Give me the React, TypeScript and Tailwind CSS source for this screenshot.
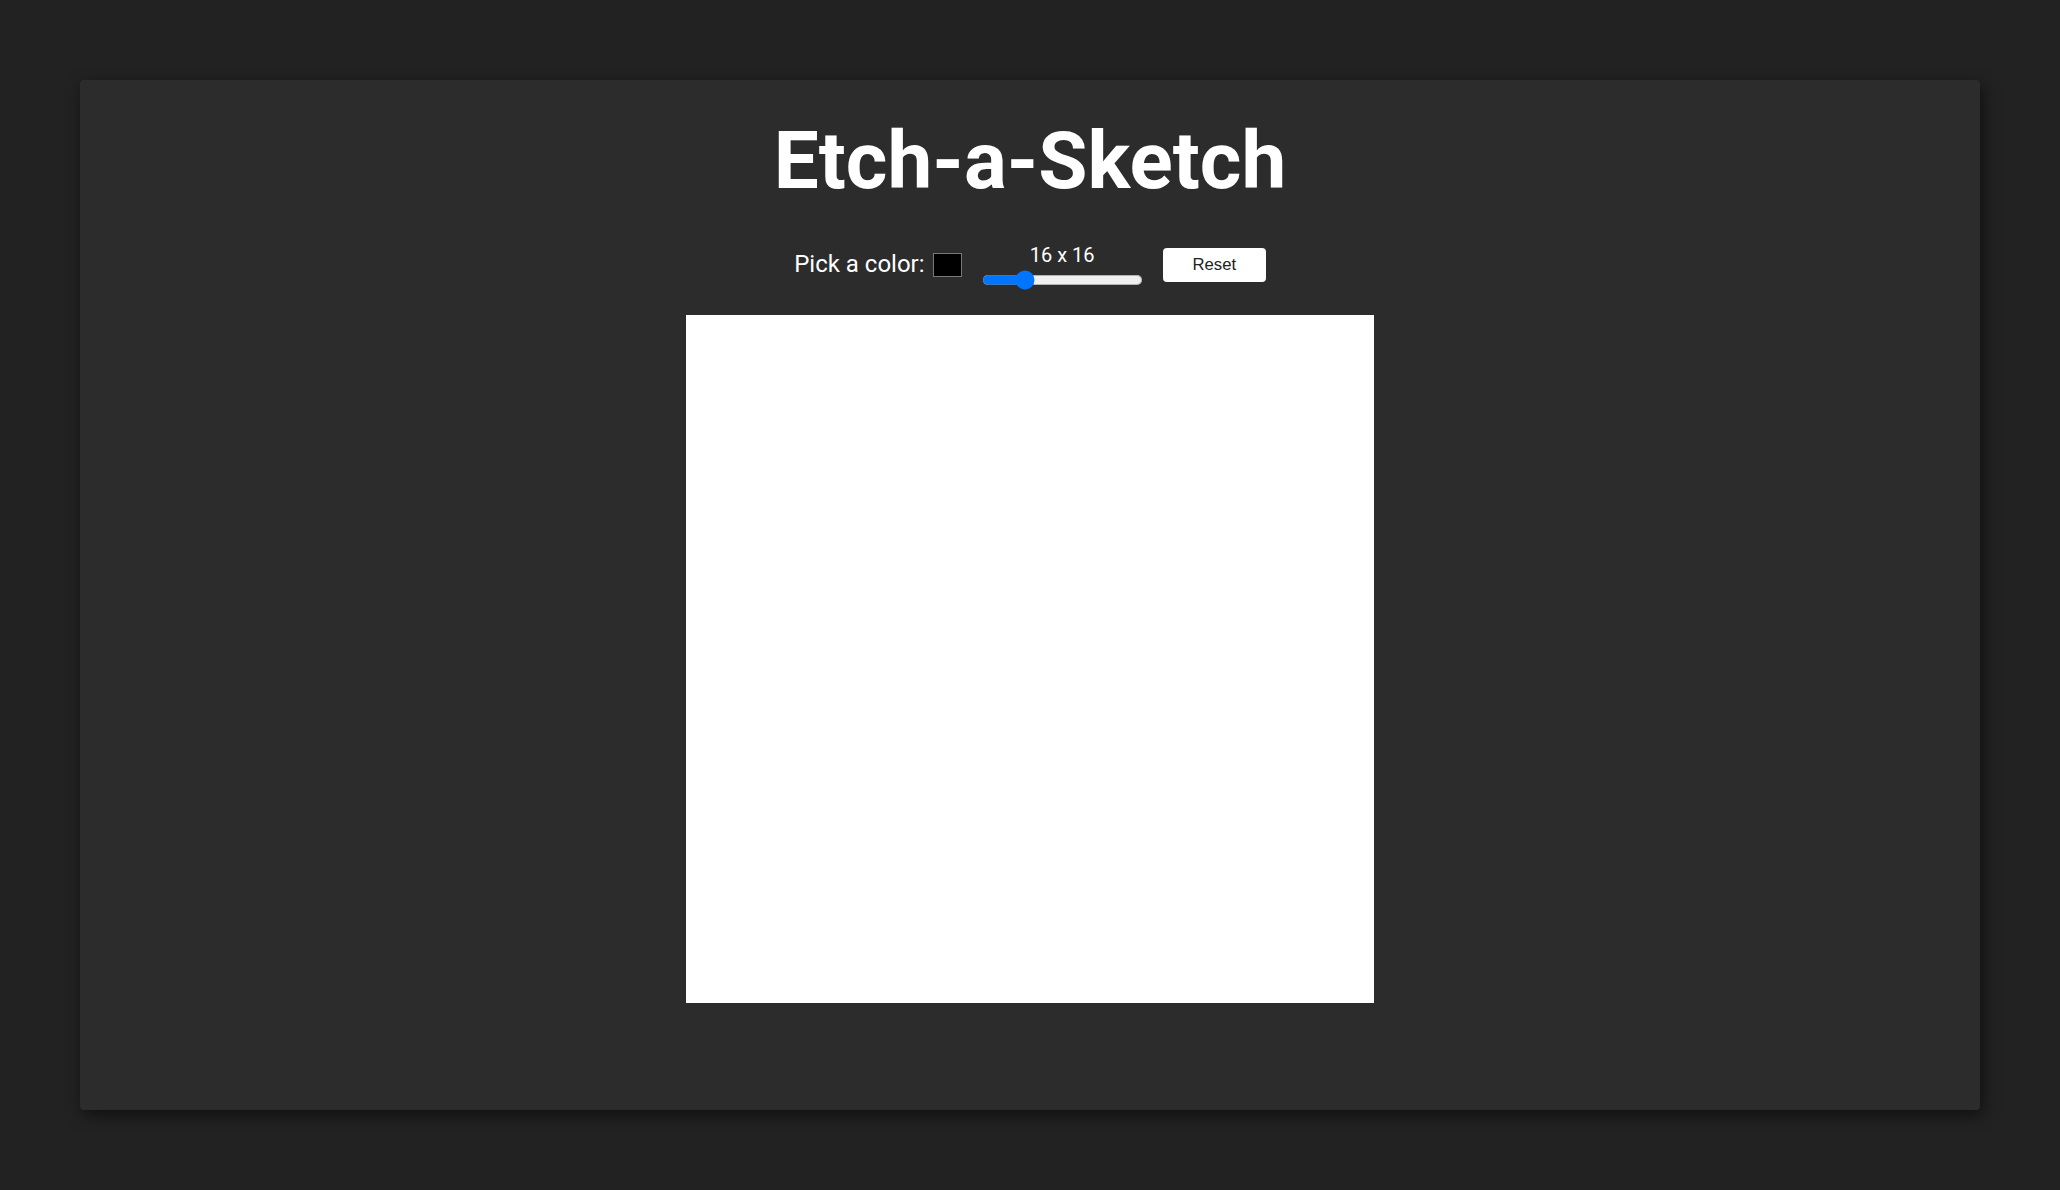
export default function App() {
  return (
    <div className="min-h-screen bg-[#222222] p-[80px]">
      <div className="h-[1030px] bg-[#2c2c2c] rounded-[4px] shadow-[3px_5px_16px_rgba(0,0,0,0.55)] flex flex-col items-center pt-[41px] font-['Roboto',sans-serif]">
        <h1 className="text-[80px] leading-none font-bold text-white">Etch-a-Sketch</h1>

        <div className="mt-[39px] h-[56px] flex items-start justify-center">
          <label className="mt-[6px] text-[24px] text-white flex items-start">
            Pick a color:
            <span className="ml-[8px] mt-[7px] block w-[29px] h-[24px] bg-black border border-[#787878]" />
          </label>

          <div className="ml-[20px] mt-0 flex flex-col items-center">
            <span className="text-[20px] text-white">16 x 16</span>
            <input
              type="range"
              min={1}
              max={64}
              defaultValue={16}
              className="[zoom:1.25] accent-[#0075ff]"
            />
          </div>

          <button className="ml-[20px] mt-[8px] w-[103px] h-[34px] bg-white rounded-[4px] text-[16.7px] text-[#222] font-['Liberation_Sans',sans-serif]">
            Reset
          </button>
        </div>

        <div className="mt-[19px] w-[688px] h-[688px] bg-white" />
      </div>
    </div>
  )
}
